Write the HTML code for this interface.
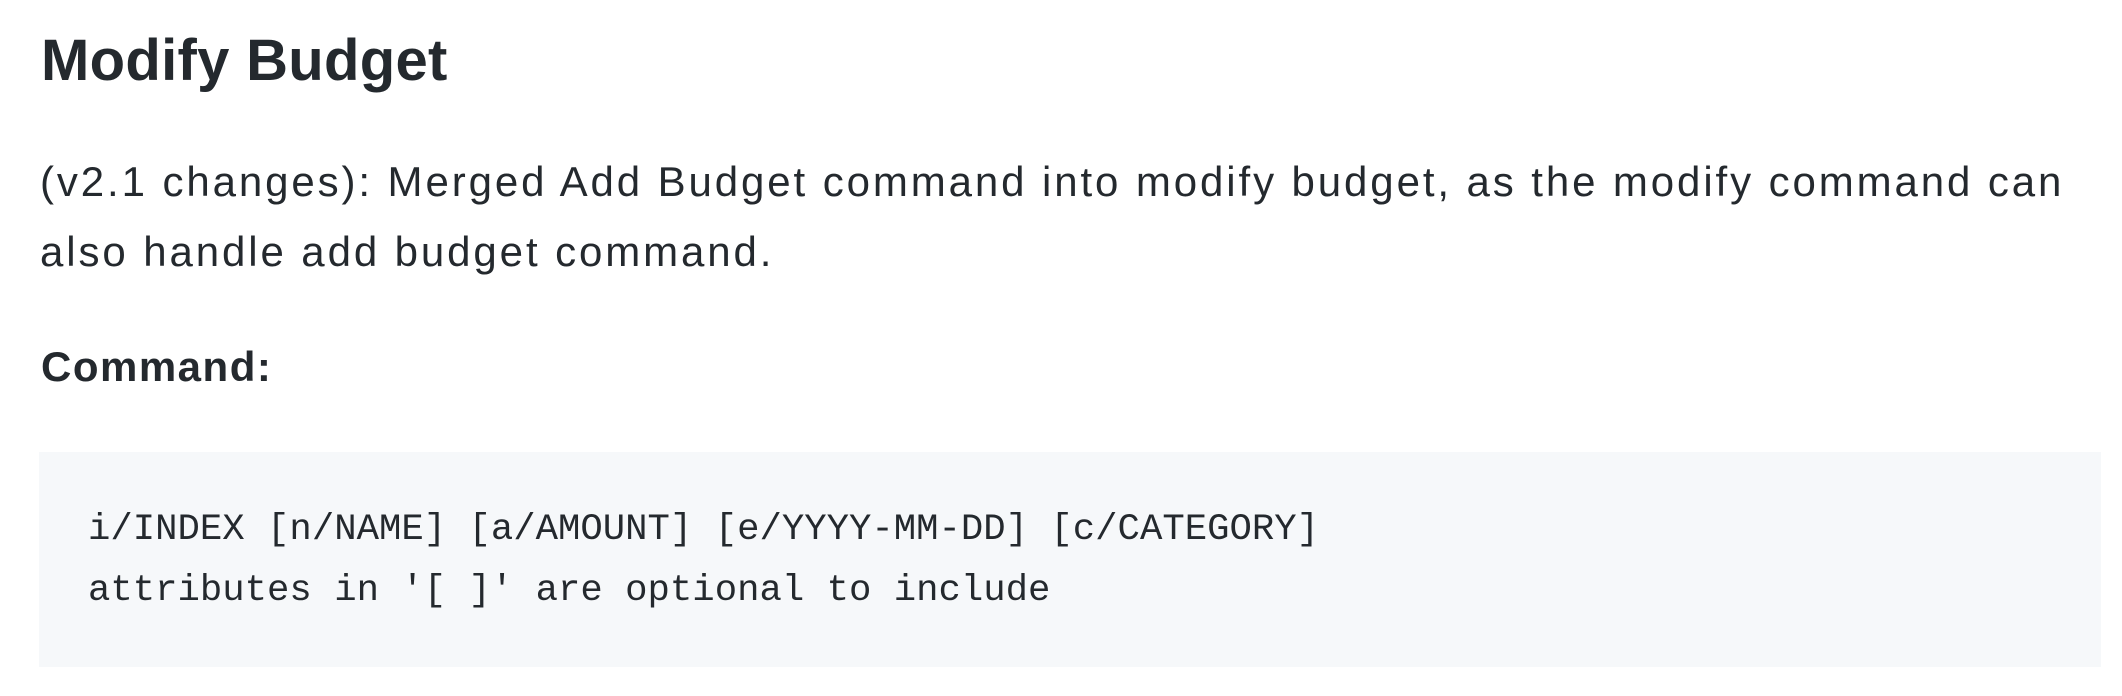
<!DOCTYPE html>
<html><head><meta charset="utf-8"><style>
body{margin:0;width:2122px;height:696px;background:#fff;color:#24292e;font-family:"Liberation Sans",sans-serif;position:relative;overflow:hidden}
.h{position:absolute;left:41px;top:21px;font-size:58px;font-weight:bold;line-height:80px;white-space:nowrap;letter-spacing:0.3px}
.p{position:absolute;left:40px;top:147px;font-size:42px;line-height:70px;white-space:nowrap;letter-spacing:2.9px}
.c{position:absolute;left:41px;top:337px;font-size:42px;font-weight:bold;line-height:60px;letter-spacing:1.5px}
.pre{position:absolute;left:39px;top:452px;width:2062px;height:215px;background:#f6f8fa}
.code{position:absolute;left:88px;top:500px;font-family:"Liberation Mono",monospace;font-size:37.3px;line-height:61px;white-space:pre}
</style></head><body>
<div class="h">Modify Budget</div>
<div class="p">(v2.1 changes): Merged Add Budget command into modify budget, as the modify command can<br>also handle add budget command.</div>
<div class="c">Command:</div>
<div class="pre"></div>
<div class="code">i/INDEX [n/NAME] [a/AMOUNT] [e/YYYY-MM-DD] [c/CATEGORY]
attributes in '[ ]' are optional to include</div>
</body></html>
